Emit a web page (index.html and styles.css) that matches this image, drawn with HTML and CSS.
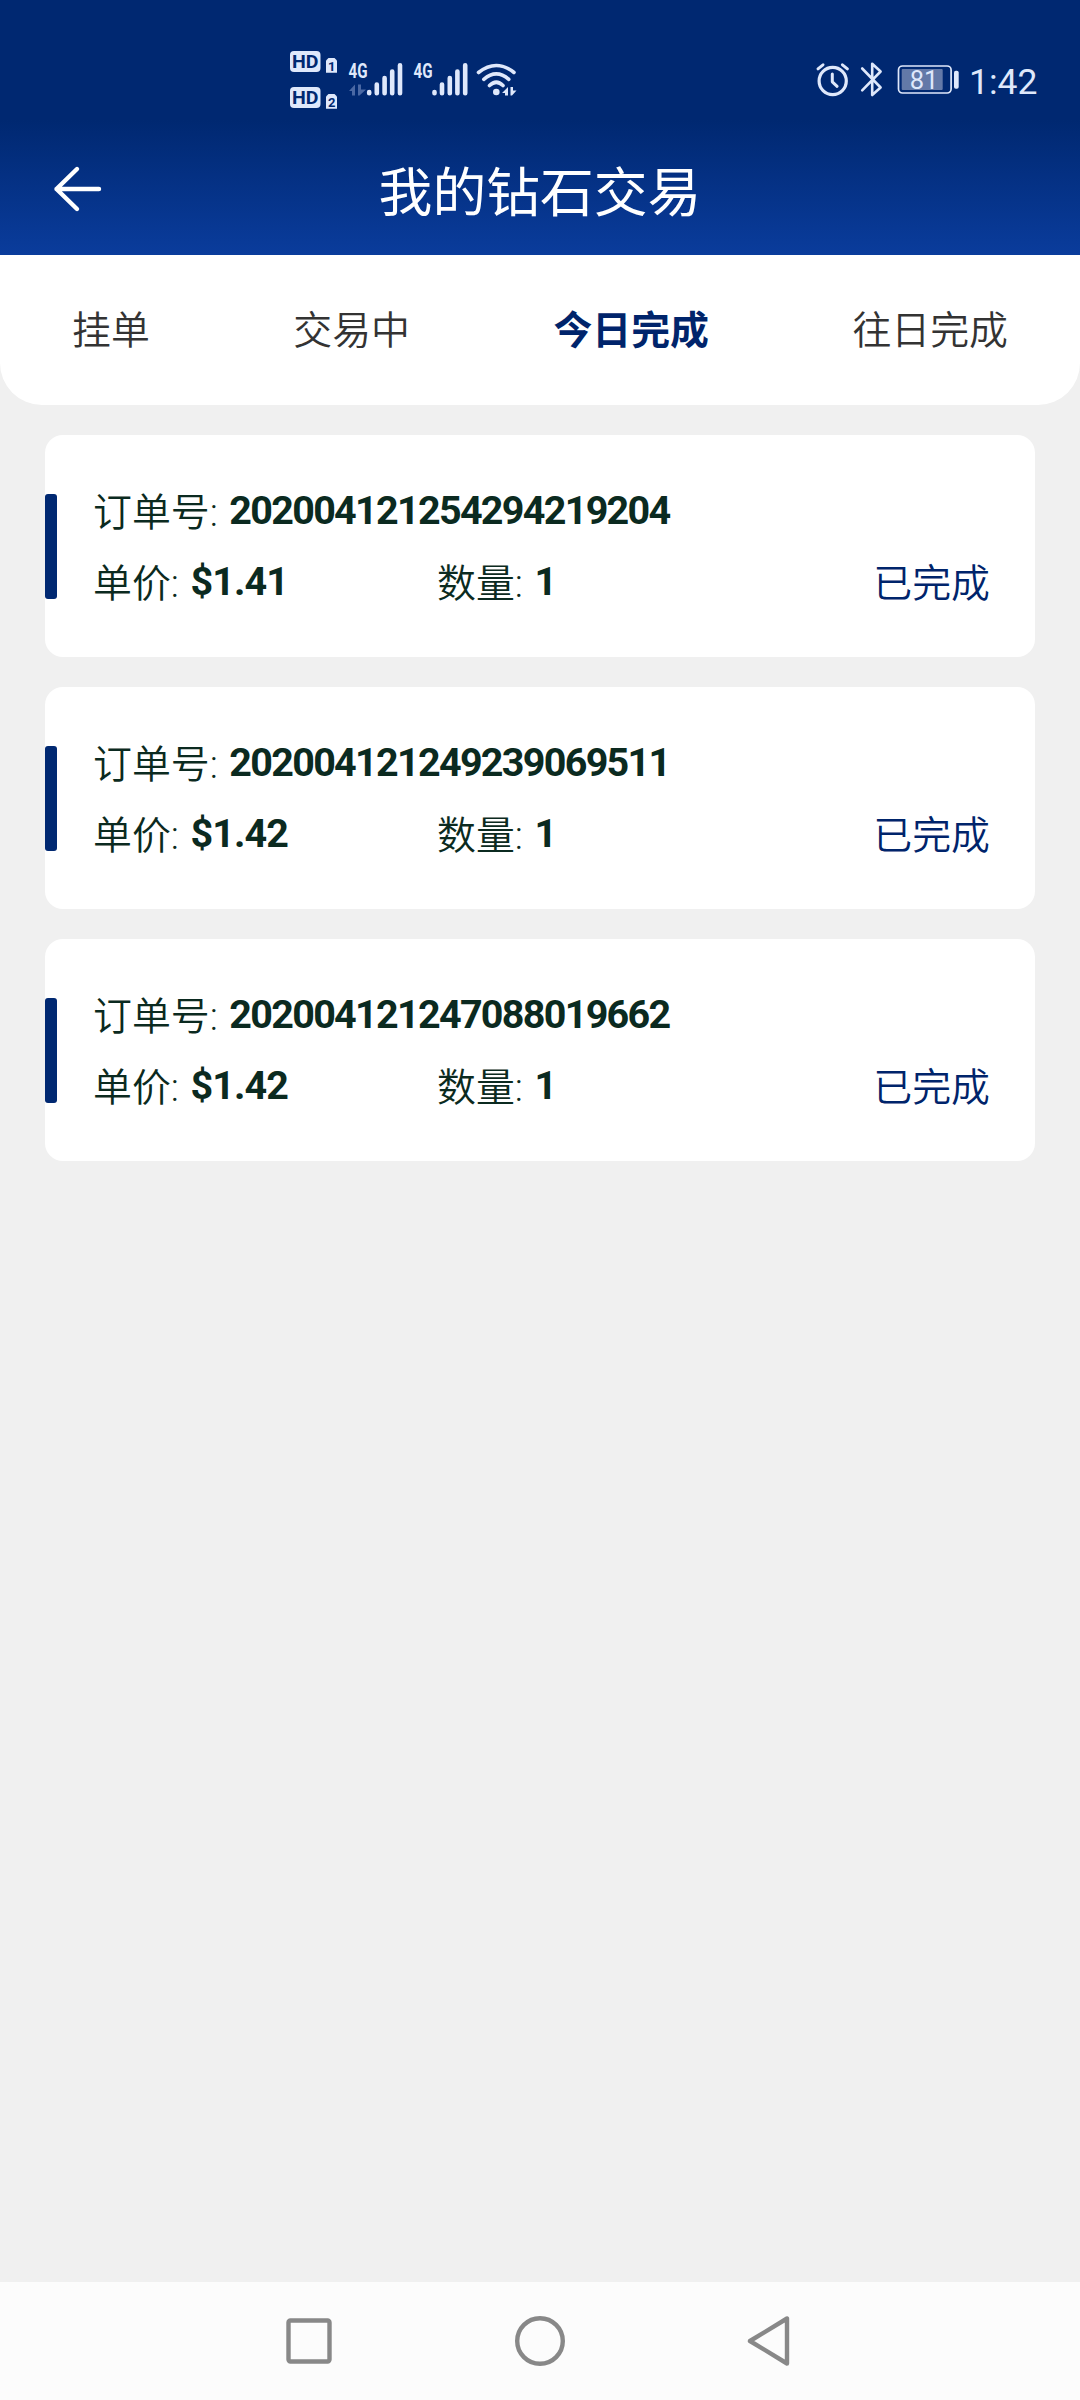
FILE: index.html
```html
<!DOCTYPE html>
<html lang="zh-CN">
<head>
<meta charset="utf-8">
<title>我的钻石交易</title>
<link rel="stylesheet" href="styles.css">
</head>
<body>
<div class="screen">
  <header class="header">
    <div class="status">
      <svg class="signals" width="250" height="70" viewBox="280 45 250 70">
        <g fill="#dfe8fb">
          <rect x="290" y="51" width="30.5" height="21" rx="4"/>
          <path d="M328.5 58h6l2.500 2.500v12.200h-11v-12.200z"/>
          <rect x="290" y="87" width="30.500" height="21" rx="4"/>
          <path d="M328.500 94h6l2.500 2.500v12.200h-11v-12.200z"/>
        </g>
        <g class="badge">
          <text x="292" y="68" font-size="19" textLength="26.500" lengthAdjust="spacingAndGlyphs">HD</text>
          <text x="292" y="104" font-size="19" textLength="26.500" lengthAdjust="spacingAndGlyphs">HD</text>
          <text x="328" y="71" font-size="13">1</text>
          <text x="328" y="107" font-size="13">2</text>
        </g>
        <g class="net">
          <text x="348.500" y="77.700" font-size="20.500" textLength="19" lengthAdjust="spacingAndGlyphs">4G</text>
          <text x="413.500" y="77.700" font-size="20.500" textLength="19" lengthAdjust="spacingAndGlyphs">4G</text>
        </g>
        <path d="M349 91l6-6.500v11h-3v-4.500zM358 84.500h3v5h5l-6.500 6h-1.500z" fill="#4a68a4"/>
        <g stroke="#dfe8fb" stroke-width="4.600" stroke-linecap="round">
          <path d="M369.200 92v1.300M376.800 84.500v8.800M384.600 78v15.300M392.200 71.500v21.800M400 65.200v28.100"/>
          <path d="M434.500 92v1.300M442 84.500v8.800M449.800 78v15.300M457.400 71.500v21.800M465.200 65.200v28.100"/>
        </g>
        <g fill="none" stroke="#dfe8fb" stroke-width="3.600" stroke-linecap="round">
          <path d="M478.500 72.500Q496.300 58.500 514 72.500M483.800 79.300Q496.300 68.500 508.800 79.300M489.500 85.500Q496.300 79 503 85.500"/>
        </g>
        <circle cx="496.300" cy="92" r="3.300" fill="#dfe8fb"/>
        <path d="M502 93l6-6v8.500h-3v-2.500zM510.500 87h2.500v3.500h3.500l-4.500 5h-1.500z" fill="#dfe8fb"/>
      </svg>
      <svg class="system" width="230" height="50" viewBox="810 55 230 50">
        <g fill="none" stroke="#dfe8fb" stroke-linecap="round" stroke-linejoin="round">
          <circle cx="832.700" cy="81" r="13.600" stroke-width="3.200"/>
          <path d="M832.300 74v7.800l4.800 4.500M818 68.800l5-4M842.400 64.800l5 4" stroke-width="3"/>
          <path d="M862.200 68.500L880.600 87.500L872.200 95V63.800L880.600 71.500L862.200 90.300" stroke-width="2.600"/>
          <rect x="898.500" y="66" width="52.600" height="27" rx="4" stroke-width="1.700"/>
        </g>
        <rect x="901.700" y="69" width="41" height="21" rx="1" fill="#6379a8"/>
        <rect x="954" y="70.700" width="4.700" height="18" rx="1.800" fill="#dfe8fb"/>
        <g class="clock">
          <text x="909.700" y="89" font-size="25.500">81</text>
          <text x="969" y="94" font-size="35.500">1:42</text>
        </g>
      </svg>
    </div>
    <div class="titlebar">
      <svg class="back" width="52" height="48" viewBox="52 165 52 48">
        <path d="M99 189H56.500M77 169L56.500 189L77 209" fill="none" stroke="#fff" stroke-width="4.400" stroke-linecap="round" stroke-linejoin="round"/>
      </svg>
      <h1 class="title">我的钻石交易</h1>
    </div>
  </header>
  <nav class="tabs">
    <span class="tab">挂单</span>
    <span class="tab">交易中</span>
    <span class="tab active">今日完成</span>
    <span class="tab">往日完成</span>
  </nav>
  <main class="orders">
    <article class="order">
      <div class="details">
        <div class="row"><span class="label">订单号:</span><b class="value">202004121254294219204</b></div>
        <div class="row"><div class="field"><span class="label">单价:</span><b class="value price">$1.41</b></div><div class="field"><span class="label">数量:</span><b class="value">1</b></div><span class="state">已完成</span></div>
      </div>
    </article>
    <article class="order">
      <div class="details">
        <div class="row"><span class="label">订单号:</span><b class="value">202004121249239069511</b></div>
        <div class="row"><div class="field"><span class="label">单价:</span><b class="value price">$1.42</b></div><div class="field"><span class="label">数量:</span><b class="value">1</b></div><span class="state">已完成</span></div>
      </div>
    </article>
    <article class="order">
      <div class="details">
        <div class="row"><span class="label">订单号:</span><b class="value">202004121247088019662</b></div>
        <div class="row"><div class="field"><span class="label">单价:</span><b class="value price">$1.42</b></div><div class="field"><span class="label">数量:</span><b class="value">1</b></div><span class="state">已完成</span></div>
      </div>
    </article>
  </main>
  <footer class="navbar">
    <svg width="52" height="52" viewBox="0 0 52 52"><rect x="5.500" y="5.500" width="41" height="41" rx="2"/></svg>
    <svg width="52" height="52" viewBox="0 0 52 52"><circle cx="26" cy="26" r="22.800"/></svg>
    <svg width="52" height="52" viewBox="0 0 52 52"><path d="M5 26L42 3.500V48.500Z"/></svg>
  </footer>
</div>
</body>
</html>
```
FILE: styles.css
```css
* { box-sizing: border-box; }
body { margin: 0; font-family: Roboto, "Noto Sans CJK SC", sans-serif; }
svg { display: block; flex: none; }

.screen {
  width: 1080px;
  height: 2400px;
  display: flex;
  flex-direction: column;
  background: #f0f0f0;
}

.header {
  height: 255px;
  background: linear-gradient(#002871 0, #002871 120px, #0a3c9c 255px);
}
.status {
  height: 120px;
  padding: 45px 40px 0 280px;
  display: flex;
  justify-content: space-between;
}
.system { margin-top: 10px; }
.badge { fill: #002871; font-weight: 700; }
.net { fill: #dfe8fb; font-weight: 700; }
.clock { fill: #dfe8fb; font-weight: 400; }

.titlebar {
  height: 135px;
  padding: 0 52px 0;
  display: grid;
  grid-template-columns: 52px 1fr 52px;
}
.back { margin-top: 45px; }
.title {
  margin: 0;
  color: #fff;
  font-size: 53.8px;
  font-weight: 400;
  line-height: 148px;
  text-align: center;
  white-space: nowrap;
}

.tabs {
  height: 150px;
  padding: 0 72px;
  display: flex;
  justify-content: space-between;
  background: #fff;
  border-radius: 0 0 42px 42px;
  color: #333;
  font-size: 38.88px;
  font-weight: 350;
  line-height: 152px;
}
.active { color: #00246b; font-weight: 700; }

.orders {
  flex: 1;
  padding: 30px 45px;
  display: flex;
  flex-direction: column;
  gap: 30px;
}
.order {
  height: 222px;
  display: flex;
  align-items: center;
  background: #fff;
  border-radius: 18px;
}
.order::before {
  content: "";
  width: 12px;
  height: 105px;
  border-radius: 3px;
  background: #002871;
}
.details {
  flex: 1;
  padding: 0 45px 0 36px;
}
.row {
  height: 71px;
  display: flex;
  line-height: 76px;
  font-size: 38.88px;
  color: #0b2a20;
}
.field { width: 344px; display: flex; }
.label { font-weight: 350; margin-right: 11.5px; }
.value {
  font-size: 39.5px;
  letter-spacing: -1.7px;
  line-height: 71px;
}
.price { letter-spacing: -0.9px; }
.state {
  margin-left: auto;
  color: #00246b;
  font-weight: 350;
}

.navbar {
  height: 118px;
  padding: 0 283px;
  display: flex;
  justify-content: space-between;
  align-items: center;
  background: #fcfcfc;
}
.navbar svg { fill: none; stroke: #888; stroke-width: 4.4; stroke-linejoin: round; }
```
